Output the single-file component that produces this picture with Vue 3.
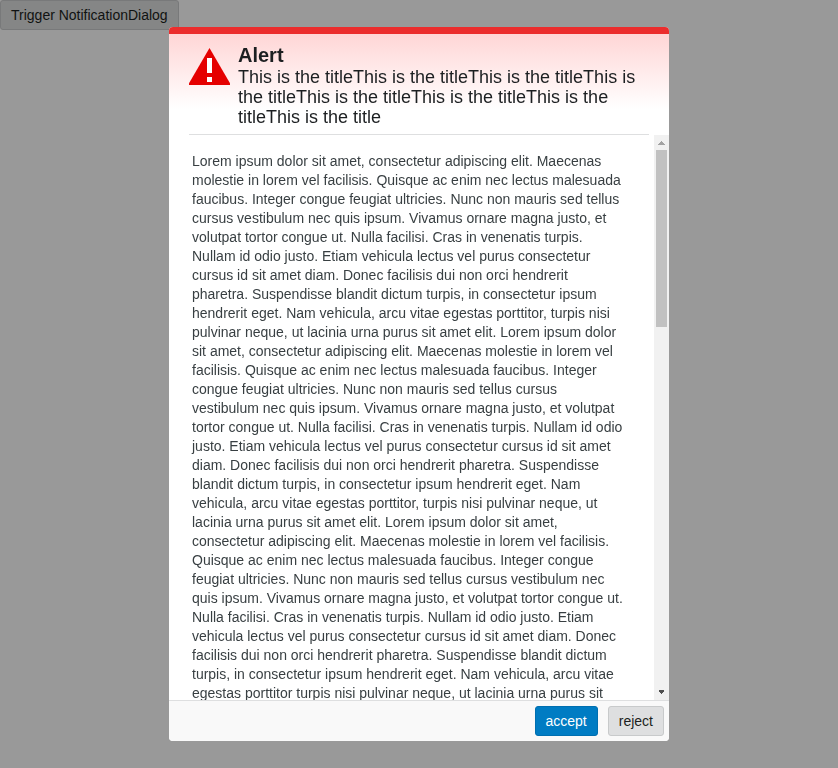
<script setup>
import { computed, onBeforeUnmount, onMounted, reactive, ref } from 'vue'

const open = ref(true)
const title = Array(8).fill('This is the title').join('')
const passage =
  'Lorem ipsum dolor sit amet, consectetur adipiscing elit. Maecenas molestie in lorem vel facilisis. Quisque ac enim nec lectus malesuada faucibus. Integer congue feugiat ultricies. Nunc non mauris sed tellus cursus vestibulum nec quis ipsum. Vivamus ornare magna justo, et volutpat tortor congue ut. Nulla facilisi. Cras in venenatis turpis. Nullam id odio justo. Etiam vehicula lectus vel purus consectetur cursus id sit amet diam. Donec facilisis dui non orci hendrerit pharetra. Suspendisse blandit dictum turpis, in consectetur ipsum hendrerit eget. Nam vehicula, arcu vitae egestas porttitor, turpis nisi pulvinar neque, ut lacinia urna purus sit amet elit.'
const closing = passage.replace('porttitor,', 'porttitor')
const message = [passage, passage, closing, passage, passage, closing, passage, passage, closing].join(' ')

const body = ref(null)
const scroll = reactive({ top: 0, view: 1, full: 1 })

function measure() {
  if (!body.value) return
  scroll.top = body.value.scrollTop
  scroll.view = body.value.clientHeight
  scroll.full = body.value.scrollHeight
}

function step(amount) {
  body.value.scrollBy({ top: amount })
}

const thumb = computed(() => ({
  top: `${(scroll.top / scroll.full) * 100}%`,
  height: `${(scroll.view / scroll.full) * 100}%`
}))

onMounted(() => {
  measure()
  window.addEventListener('resize', measure)
})
onBeforeUnmount(() => window.removeEventListener('resize', measure))
</script>

<template>
  <div class="page">
    <button type="button" class="btn trigger" @click="open = true">Trigger NotificationDialog</button>
    <div v-if="open" class="overlay">
      <section class="dialog" role="alertdialog" aria-modal="true" aria-labelledby="dialog-signal dialog-title">
        <header class="header">
          <div class="header-inner">
            <svg class="icon" viewBox="0 0 41 37" aria-hidden="true">
              <path fill="#e50000" d="M20.5 0 41 35.3V37H0v-1.7z" />
              <path fill="#fff" d="M18 10h5v15h-5zM18 29h5v5h-5z" />
            </svg>
            <div>
              <h1 id="dialog-signal" class="signal">Alert</h1>
              <p id="dialog-title" class="title">{{ title }}</p>
            </div>
          </div>
        </header>
        <div class="content">
          <div ref="body" class="body" tabindex="0" @scroll="measure">
            <p class="message">{{ message }}</p>
          </div>
          <div class="scrollbar" aria-hidden="true">
            <button type="button" class="arrow" :class="{ idle: scroll.top === 0 }" tabindex="-1" @click="step(-40)">
              <svg viewBox="0 0 15 15"><path d="M4 10V9h1V8h1V7h1V6h1v1h1v1h1v1h1v1z" /></svg>
            </button>
            <div class="track"><div class="thumb" :style="thumb"></div></div>
            <button type="button" class="arrow" tabindex="-1" @click="step(40)">
              <svg viewBox="0 0 15 15"><path d="M5 5h5v2H9v1H8v1H7V8H6V7H5z" /></svg>
            </button>
          </div>
        </div>
        <footer class="footer">
          <button type="button" class="btn accept" @click="open = false">accept</button>
          <button type="button" class="btn" @click="open = false">reject</button>
        </footer>
      </section>
    </div>
  </div>
</template>

<style>
body {
  margin: 0;
  background: #fff;
}
</style>

<style scoped>
.page {
  min-height: 100vh;
  font-family: "Liberation Sans", Arial, sans-serif;
  font-size: 14px;
  color: #1c1f21;
}

.btn {
  box-sizing: border-box;
  height: 30px;
  padding: 0 10px;
  border: 1px solid #c8cacb;
  border-radius: 3px;
  background: #dedfe0;
  color: #1c1f21;
  font: inherit;
  line-height: 28px;
  cursor: pointer;
}

.trigger {
  display: block;
}

.overlay {
  position: fixed;
  inset: 0;
  display: flex;
  justify-content: center;
  padding: 27px 20px;
  background: rgba(0, 0, 0, 0.4);
}

.dialog {
  display: flex;
  flex-direction: column;
  width: 100%;
  max-width: 500px;
  overflow: hidden;
  border-radius: 4px;
  background: #fff;
}

.header {
  flex: none;
  padding: 0 20px;
  border-top: 7px solid #eb2d2d;
  background: linear-gradient(#ffd6d6, #fff 75px);
}

.header-inner {
  display: flex;
  gap: 8px;
  padding: 10px 0 7px;
  border-bottom: 1px solid #dedfe0;
}

.icon {
  flex: none;
  width: 41px;
  height: 37px;
  margin-top: 4px;
}

.signal,
.title,
.message {
  margin: 0;
}

.signal {
  font-size: 20px;
  line-height: 23px;
}

.title {
  font-size: 18px;
  line-height: 20px;
}

.content {
  display: flex;
  flex: 1;
  min-height: 0;
}

.body {
  flex: 1;
  overflow-y: auto;
  padding: 17px 29px 17px 23px;
  outline: none;
  scrollbar-width: none;
}

.message {
  color: #383f42;
  line-height: 19px;
}

.scrollbar {
  display: flex;
  flex: none;
  flex-direction: column;
  width: 15px;
  background: #f1f1f1;
}

.arrow {
  flex: none;
  width: 15px;
  height: 15px;
  padding: 0;
  border: 0;
  background: none;
  color: #505050;
}

.arrow.idle {
  color: #a3a3a3;
}

.arrow svg {
  display: block;
  width: 15px;
  height: 15px;
  fill: currentColor;
  shape-rendering: crispEdges;
}

.track {
  position: relative;
  flex: 1;
}

.thumb {
  position: absolute;
  right: 2px;
  left: 2px;
  background: #c1c1c1;
}

.footer {
  display: flex;
  flex: none;
  justify-content: flex-end;
  gap: 10px;
  padding: 5px;
  border-top: 1px solid #dedfe0;
  background: #f9f9f9;
}

.accept {
  border-color: #006fb0;
  background: #007cc3;
  color: #fff;
}
</style>
